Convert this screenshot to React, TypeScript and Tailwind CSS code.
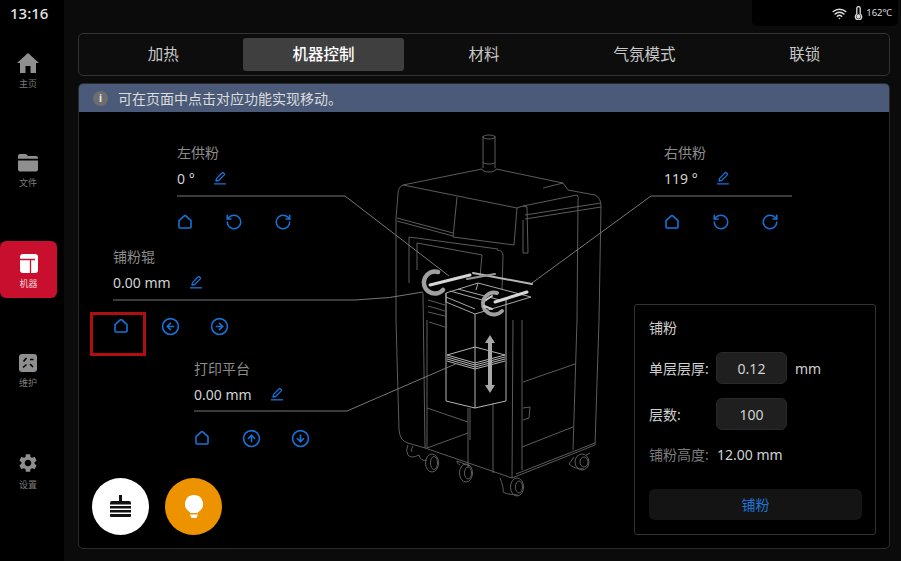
import { CircleArrowDown, CircleArrowLeft, CircleArrowRight, CircleArrowUp, RotateCcw, RotateCw, Wifi } from 'lucide-react';
import { MdSettings } from 'react-icons/md';
import type { ReactNode } from 'react';

const FONT = 'font-["Noto_Sans","Noto_Sans_CJK_SC",sans-serif]';

function HomeOutline() {
  return (
    <svg width="16" height="16" viewBox="0 0 16 16" fill="none" stroke="currentColor" strokeWidth="1.6" strokeLinejoin="round">
      <path d="M2 6.600 7.200 1.900a1.200 1.200 0 0 1 1.600 0L14 6.600V13a1 1 0 0 1-1 1H3a1 1 0 0 1-1-1Z" />
    </svg>
  );
}

function EditIcon() {
  return (
    <svg width="14" height="14" viewBox="0 0 14 14" fill="none" stroke="currentColor" strokeWidth="1.3" strokeLinejoin="round">
      <path d="M3 10 3.600 7.400 9.200 1.800a.8.8 0 0 1 1.100 0l1 1a.8.8 0 0 1 0 1.100L5.600 9.500Z" />
      <path d="M1 12.800H13" />
    </svg>
  );
}

function ControlNode({ className, label, value, icons }: { className: string; label: string; value: string; icons: ReactNode[] }) {
  return (
    <div className={`absolute ${className}`}>
      <div className="text-[14px] leading-4 text-[#8c8c8c]">{label}</div>
      <div className="mt-[8px] flex h-[18px] items-center text-[14px] text-[#d2d2d2]">
        <span className="mr-[18px]">{value}</span>
        <span className="text-[#1872d6]"><EditIcon /></span>
      </div>
      <div className="mt-[27px] flex gap-[33px] text-[#1872d6]">
        {icons.map((icon, i) => (
          <span key={i} className="flex h-4 w-4 items-center justify-center [&>svg]:shrink-0">{icon}</span>
        ))}
      </div>
    </div>
  );
}

function SideItem({ label, icon, active }: { label: string; icon: ReactNode; active?: boolean }) {
  return (
    <div className="flex h-[100px] items-center">
      <div className={`flex flex-col items-center justify-center pt-[5px] ${active ? 'h-[57px] w-[57px] rounded-[6px] bg-[#c8102e] text-white' : 'w-[56px] text-[#8f8f8f]'}`}>
        {icon}
        <span className={`mt-[5px] text-[9px] leading-3 ${active ? 'text-[#f2d5d9]' : 'text-[#7c7c7c]'}`}>{label}</span>
      </div>
    </div>
  );
}

function Machine() {
  const thin = { stroke: '#666', strokeWidth: 0.9, fill: 'none' };
  const leader = { stroke: '#777', strokeWidth: 1, fill: 'none' };
  const bright = { stroke: '#b5b5b5', strokeWidth: 1, fill: 'none' };
  return (
    <svg className="absolute left-0 top-0 h-[436px] w-[811px]" viewBox="79 112 811 436">
      <g {...thin}>
        {/* beacon */}
        <path d="M483 136V168M495 136V168M483 137a6 2 0 0 0 12 0a6 2 0 0 0-12 0M483 162a6 2 0 0 0 12 0M482 169a7 3 0 0 0 14 0" />
        {/* outer shell */}
        <path d="M482 169 403 185Q398 187 398 194L396 218V320L399 430Q400 441 408 443L425 448 512 478 595 445 599 320 601 206Q601 198 595 195L568 190 563 183 496 169" />
        <path d="M403 185 517 208 523 206 577 195M543 188 563 183M577 195Q579 197 578 202L577 320 573 450" />
        <path d="M397 218 453 233M397 221 453 236M457 197 453 237 514 245 517 208M523 206 527 207 528 253 523 253 523 220M525 215 601 203M525 219 601 207" />
        {/* window */}
        <path d="M409 283V237L498 249M417 270V243L482 255 480 277" />
        <path d="M497 250Q503 250 503 256L502 290" />
        {/* chassis */}
        <path d="M423 293 425 448M427 320 427 448M427 408 468 422M427 448 468 433M468 408V467M470 408V440M493 403V473M513 320 512 478M522 320 522 470M523 382 575 364M522 447 573 427M516 474 595 443" />
        <path d="M523 408 530 407 529 418 523 420M428 300 445 305M428 306 445 311M428 312 445 316M429 322 445 327" />
        {/* casters */}
        <path d="M408 445Q405 451 408 455T419 455Q421 462 427 460" />
        <path d="M413 446Q410 450 412 452" />
        <ellipse cx="432" cy="463" rx="6.500" ry="9" />
        <ellipse cx="434" cy="463" rx="3.500" ry="6.500" />
        <ellipse cx="466" cy="473" rx="6.500" ry="9" />
        <ellipse cx="468" cy="473" rx="3.500" ry="6" />
        <path d="M460 465Q456 463 457 461L470 466" />
        <ellipse cx="517" cy="487" rx="6.500" ry="9" />
        <ellipse cx="519" cy="487" rx="3.500" ry="6" />
        <path d="M500 478Q504 488 503 491T518 495" />
        <ellipse cx="582" cy="462" rx="7" ry="8" />
        <ellipse cx="584" cy="462" rx="4" ry="5" />
        <path d="M574 457 569 464Q574 469 584 469M590 453 586 455" />
      </g>
      {/* powder box */}
      <g {...bright}>
        <path d="M446 293V401L475 408 506 401V300M475 314V408" />
        <path d="M447 355 475 347 505 355 475 363ZM447 357 475 365 505 357M447 359 475 367 505 359M447 361 475 369 505 361" />
      </g>
      <path d="M490 335 495 343H492V385H495L490 393 485 385H488V343H485Z" fill="#a9a9a9" />
      {/* rollers */}
      <g fill="none" stroke="#a8a8a8" strokeWidth="1">
        <path d="M446 293 478 283 531 297 475 314 446 302ZM446 297 475 309M450 291 486 301M458 289 500 300M478 283 476 290" />
      </g>
      <g fill="none" strokeLinecap="round">
        <path d="M430 285 470 275" stroke="#d6d6d6" strokeWidth="3" />
        <path d="M473 273 532 284" stroke="#b5b5b5" strokeWidth="2" />
        <path d="M467 279 495 274" stroke="#999" strokeWidth="2" />
        <path d="M495 302 527 292" stroke="#d6d6d6" strokeWidth="3" />
        <path d="M438 272A11 11 0 1 0 443 290" stroke="#a0a0a0" strokeWidth="4.500" />
        <path d="M497 293A11 11 0 1 0 502 311" stroke="#a0a0a0" strokeWidth="4" />
        <path d="M486 300 492 296M484 306 492 309" stroke="#ccc" strokeWidth="2" />
      </g>
      {/* leader lines */}
      <g {...leader}>
        <path d="M177 196H345L449 276" />
        <path d="M792 196H651L532 283" />
        <path d="M113 300H355Q390 299 423 292" />
        <path d="M194 411H347L460 362" />
      </g>
    </svg>
  );
}

export default function App() {
  const tabs = ['加热', '机器控制', '材料', '气氛模式', '联锁'];
  return (
    <div className={`flex h-[561px] w-[901px] overflow-hidden bg-[#0b0b0b] ${FONT}`}>
      {/* sidebar */}
      <aside className="flex h-full w-[64px] shrink-0 flex-col bg-black">
        <div className="mb-[-6px] h-[25px] pl-[10px] pt-[2px] text-[15px] font-medium leading-[22px] text-[#e4e4e4]">13:16</div>
        <SideItem
          label="主页"
          icon={
            <svg width="22" height="20" viewBox="0 0 22 20" fill="currentColor">
              <path d="M11 0 22 10H19V20H13.500V13H8.500V20H3V10H0Z" />
            </svg>
          }
        />
        <SideItem
          label="文件"
          icon={
            <svg width="20" height="18" viewBox="0 0 20 18" fill="currentColor">
              <path d="M2 0H8L10 2H18A2 2 0 0 1 20 4V4.800H0V2A2 2 0 0 1 2 0ZM0 6.500H20V15.500A2 2 0 0 1 18 17.500H2A2 2 0 0 1 0 15.500Z" />
            </svg>
          }
        />
        <SideItem
          active
          label="机器"
          icon={
            <svg width="18" height="19" viewBox="0 0 18 19">
              <rect width="18" height="19" rx="3" fill="#fff" />
              <path d="M0 5.500H10.500M10.500 5.500V19M10.500 5.500H15" stroke="#c8102e" strokeWidth="1.300" fill="none" />
            </svg>
          }
        />
        <SideItem
          label="维护"
          icon={
            <svg width="18" height="18" viewBox="0 0 18 18">
              <rect width="18" height="18" rx="3" fill="currentColor" />
              <path d="M4.500 7.500 7.500 4M11 5.500H14.500M4 13.500 7.500 10.500M11 10 14 13" stroke="#000" strokeWidth="1.600" fill="none" />
            </svg>
          }
        />
        <SideItem label="设置" icon={<MdSettings size={22} />} />
      </aside>

      {/* main column */}
      <main className="relative min-w-0 flex-1 pl-[14px] pr-[11px] pt-[33px]">
        <div className="absolute right-[3px] top-0 flex h-[26px] w-[146px] items-center justify-end gap-[7px] rounded-b-[5px] bg-black pr-[6px] text-[#dcdcdc]">
          <Wifi size={15} strokeWidth={2.400} />
          <span className="flex items-center gap-[3px]">
            <svg width="9" height="14" viewBox="0 0 9 14" fill="none" stroke="currentColor" strokeWidth="1.300">
              <path d="M2.800 8V2.300a1.700 1.700 0 0 1 3.400 0V8a3.200 3.200 0 1 1-3.400 0Z" />
              <circle cx="4.500" cy="10.500" r="1.500" fill="currentColor" />
            </svg>
            <span className="text-[9.500px] leading-none">162℃</span>
          </span>
        </div>

        {/* tabs */}
        <div className="grid h-[43px] grid-cols-5 rounded-[5px] border border-[#333] bg-[#0d0d0d] p-[4px]">
          {tabs.map((tab, i) => (
            <div
              key={tab}
              className={`flex items-center justify-center rounded-[3px] text-[15.500px] ${i === 1 ? 'bg-[#3f3f3f] font-medium text-white' : 'text-[#c9c9c9]'}`}
            >
              {tab}
            </div>
          ))}
        </div>

        {/* panel */}
        <section className="mt-[7px] flex h-[466px] flex-col overflow-hidden rounded-[5px] border border-[#2a2a2a] bg-black">
          <div className="flex h-[28px] shrink-0 items-center gap-[10px] bg-[#4a5a78] pl-[14px] text-[14px] text-[#dcdcdc]">
            <span className="flex h-[15px] w-[15px] items-center justify-center rounded-full bg-[#6e6e6e] text-[10px] font-bold leading-none text-[#e8e8e8]">i</span>
            可在页面中点击对应功能实现移动。
          </div>

          <div className="relative flex flex-1 items-end justify-end p-[13px]">
            <Machine />

            <ControlNode
              className="left-[98px] top-[33px]"
              label="左供粉"
              value="0 °"
              icons={[<HomeOutline />, <RotateCcw size={18} />, <RotateCw size={18} />]}
            />
            <ControlNode
              className="left-[585px] top-[33px]"
              label="右供粉"
              value="119 °"
              icons={[<HomeOutline />, <RotateCcw size={18} />, <RotateCw size={18} />]}
            />
            <ControlNode
              className="left-[34px] top-[137px]"
              label="铺粉辊"
              value="0.00 mm"
              icons={[<HomeOutline />, <CircleArrowLeft size={19} />, <CircleArrowRight size={19} />]}
            />
            <ControlNode
              className="left-[115px] top-[249px]"
              label="打印平台"
              value="0.00 mm"
              icons={[<HomeOutline />, <CircleArrowUp size={19} />, <CircleArrowDown size={19} />]}
            />

            {/* highlight box */}
            <div className="absolute left-[11px] top-[200px] h-[44px] w-[56px] border-[3px] border-[#b00f0f]" />

            {/* round actions */}
            <div className="absolute bottom-[13px] left-[13px] flex gap-[16px]">
              <button className="flex h-[57px] w-[57px] items-center justify-center rounded-full bg-white">
                <svg width="21" height="23" viewBox="0 0 21 23" fill="#111">
                  <path d="M9 0H12V6H19Q21 6 21 8V9.500H0V8Q0 6 2 6H9ZM0 11H21V13.500H0ZM0 15H21V17.500H0ZM0 19H21V21Q21 22 20 22H1Q0 22 0 21Z" />
                </svg>
              </button>
              <button className="flex h-[57px] w-[57px] items-center justify-center rounded-full bg-[#ee9300]">
                <svg width="18" height="23" viewBox="0 0 18 23" fill="#fff">
                  <path d="M9 0a9 9 0 0 1 5 16.500c-.7.500-1 1-1.200 1.500H5.200c-.2-.5-.5-1-1.200-1.500A9 9 0 0 1 9 0ZM5 19.500H13L11.500 23H6.500Z" />
                </svg>
              </button>
            </div>

            {/* powder card */}
            <div className="relative flex h-[231px] w-[242px] flex-col rounded-[3px] border border-[#333] bg-black px-[14px] pt-[13px]">
              <div className="text-[14px] leading-5 text-[#cfcfcf]">铺粉</div>
              <div className="mt-[14px] flex items-center text-[14px] text-[#cfcfcf]">
                <span className="w-[67px] whitespace-nowrap">单层层厚:</span>
                <span className="flex h-[32px] w-[71px] items-center justify-center rounded-[6px] border border-[#292929] bg-[#1f1f1f] text-[#d2d2d2]">0.12</span>
                <span className="ml-[8px]">mm</span>
              </div>
              <div className="mt-[14px] flex items-center text-[14px] text-[#cfcfcf]">
                <span className="w-[67px]">层数:</span>
                <span className="flex h-[32px] w-[71px] items-center justify-center rounded-[6px] border border-[#292929] bg-[#1f1f1f] text-[#d2d2d2]">100</span>
              </div>
              <div className="mt-[15px] flex items-center text-[14px] leading-5">
                <span className="w-[68px] whitespace-nowrap text-[#7c7c7c]">铺粉高度:</span>
                <span className="text-[#d2d2d2]">12.00 mm</span>
              </div>
              <button className="mt-[24px] h-[31px] w-[213px] rounded-[6px] bg-[#141414] text-[14px] text-[#1a75d8]">铺粉</button>
            </div>
          </div>
        </section>
      </main>
    </div>
  );
}
